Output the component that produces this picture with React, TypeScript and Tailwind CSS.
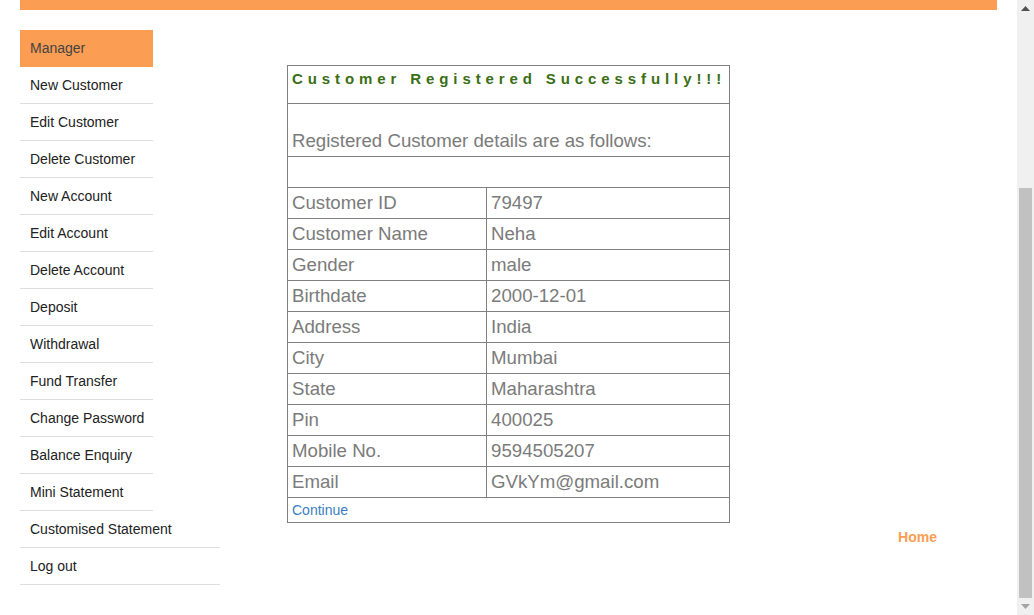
import React from "react";

const menu = [
  "New Customer",
  "Edit Customer",
  "Delete Customer",
  "New Account",
  "Edit Account",
  "Delete Account",
  "Deposit",
  "Withdrawal",
  "Fund Transfer",
  "Change Password",
  "Balance Enquiry",
  "Mini Statement",
];

const rows: [string, string][] = [
  ["Customer ID", "79497"],
  ["Customer Name", "Neha"],
  ["Gender", "male"],
  ["Birthdate", "2000-12-01"],
  ["Address", "India"],
  ["City", "Mumbai"],
  ["State", "Maharashtra"],
  ["Pin", "400025"],
  ["Mobile No.", "9594505207"],
  ["Email", "GVkYm@gmail.com"],
];

export default function App() {
  return (
    <div
      className="flex h-[615px] w-[1034px] overflow-hidden bg-white"
      style={{ fontFamily: '"Liberation Sans", Arial, sans-serif' }}
    >
      <div className="flex w-[1017px] flex-col">
        <div className="mx-[20px] h-[10px] shrink-0 bg-[#fb9d52]" />
        <div className="flex">
          <div className="ml-[20px] mt-[20px] flex w-[200px] flex-col">
            <div className="flex h-[37px] w-[133px] items-center bg-[#fb9d52] pl-[10px] text-[14px] text-[#444]">
              Manager
            </div>
            {menu.map((m) => (
              <div
                key={m}
                className="flex h-[37px] w-[133px] items-center border-b border-[#dddddd] pl-[10px] text-[14px] text-[#222]"
              >
                {m}
              </div>
            ))}
            <div className="flex h-[37px] w-[200px] items-center border-b border-[#dddddd] pl-[10px] text-[14px] text-[#222]">
              Customised Statement
            </div>
            <div className="flex h-[37px] w-[200px] items-center border-b border-[#dddddd] pl-[10px] text-[14px] text-[#222]">
              Log out
            </div>
          </div>
          <div className="ml-[67px] mt-[55px] flex flex-col">
            <div className="w-[443px] border border-[#808080] text-[#7b7b7b]">
              <div className="flex h-[37px] items-start whitespace-nowrap pl-[4px] pt-[2px] text-[15px] font-bold tracking-[4.9px] text-[#3a6e14]">
                Customer Registered Successfully!!!
              </div>
              <div className="flex h-[53px] items-end border-t border-[#808080] pb-[1px] pl-[4px] text-[18.67px]">
                Registered Customer details are as follows:
              </div>
              <div className="h-[31px] border-t border-[#808080]" />
              {rows.map(([k, v]) => (
                <div key={k} className="flex h-[31px] border-t border-[#808080] text-[18.67px]">
                  <div className="flex w-[199px] items-center border-r border-[#808080] pl-[4px]">{k}</div>
                  <div className="flex flex-1 items-center pl-[4px]">{v}</div>
                </div>
              ))}
              <div className="flex h-[25px] items-center border-t border-[#808080] pl-[4px] pt-[1px] text-[14px] text-[#3b7ec1]">
                Continue
              </div>
            </div>
            <div className="mt-[4px] flex justify-end">
              <span className="mr-[-207px] text-[14px] font-bold text-[#fb9d52]">Home</span>
            </div>
          </div>
        </div>
      </div>
      <div className="flex h-[615px] w-[17px] flex-col items-center bg-[#f0f0f0]">
        <div className="flex h-[17px] w-full items-center justify-center">
          <svg width="9" height="5" viewBox="0 0 9 5"><path d="M0 5 L4.5 0 L9 5Z" fill="#505050" /></svg>
        </div>
        <div className="mt-[171px] h-[410px] w-[13px] bg-[#c1c1c1]" />
        <div className="flex h-[17px] w-full items-center justify-center">
          <svg width="9" height="5" viewBox="0 0 9 5"><path d="M0 0 L4.5 5 L9 0Z" fill="#a3a3a3" /></svg>
        </div>
      </div>
    </div>
  );
}
